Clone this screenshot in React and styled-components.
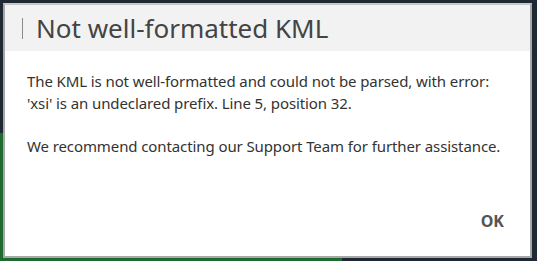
import React from 'react';
import styled, { createGlobalStyle } from 'styled-components';

const GlobalStyle = createGlobalStyle`
  html, body {
    margin: 0;
    padding: 0;
  }
  body {
    width: 537px;
    height: 261px;
    overflow: hidden;
    background:
      linear-gradient(#1f6a2e, #1f6a2e) 0 133px / 342px 128px no-repeat,
      #1f2933;
    font-family: 'Noto Sans', 'Open Sans', sans-serif;
  }
`;

const Backdrop = styled.div`
  padding: 3px 0 0 3px;
  height: 261px;
  box-sizing: border-box;
`;

const Dialog = styled.div`
  width: 529px;
  height: 255px;
  box-sizing: border-box;
  background: #ffffff;
  border: 2px solid #a7a7a7;
  border-top-color: #c8c8c8;
  display: flex;
  flex-direction: column;
`;

const Header = styled.div`
  height: 46px;
  background: #f2f2f2;
  display: flex;
  align-items: center;
  padding-left: 17px;
  gap: 13px;
`;

const Caret = styled.span`
  width: 1px;
  height: 21px;
  background: #8a8a8a;
`;

const Title = styled.h1`
  margin: 0;
  font-size: 26px;
  font-weight: 400;
  color: #444444;
  letter-spacing: 0;
`;

const Body = styled.div`
  padding: 19px 22px 0 22px;
  flex: 1;
`;

const Paragraph = styled.p`
  margin: 0 0 21px 0;
  font-size: 15px;
  line-height: 22px;
  letter-spacing: -0.1px;
  color: #333333;
`;

const Footer = styled.div`
  display: flex;
  justify-content: flex-end;
  padding: 0 26px 24px 0;
`;

const Button = styled.button`
  border: none;
  background: transparent;
  padding: 0;
  font-family: inherit;
  font-size: 16px;
  font-weight: 700;
  color: #555555;
  cursor: pointer;
`;

export default function App() {
  return (
    <>
      <GlobalStyle />
      <Backdrop>
        <Dialog>
          <Header>
            <Caret />
            <Title>Not well-formatted KML</Title>
          </Header>
          <Body>
            <Paragraph>
              The KML is not well-formatted and could not be parsed, with error:
              <br />
              'xsi' is an undeclared prefix. Line 5, position 32.
            </Paragraph>
            <Paragraph>
              We recommend contacting our Support Team for further assistance.
            </Paragraph>
          </Body>
          <Footer>
            <Button>OK</Button>
          </Footer>
        </Dialog>
      </Backdrop>
    </>
  );
}
